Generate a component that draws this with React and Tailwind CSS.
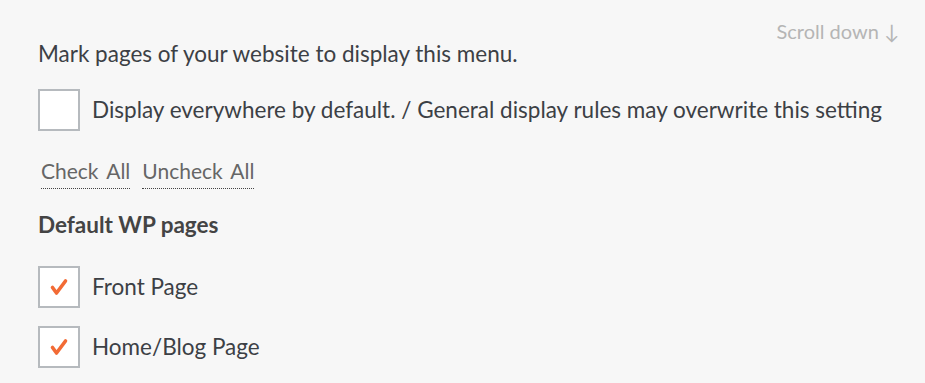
export default function App() {
  const Check = () => (
    <svg width="20" height="20" viewBox="0 0 20 20" className="block">
      <path d="M3.5 10.5 L7.5 16 L16.5 4" fill="none" stroke="#f26b35" strokeWidth="3.6" strokeLinecap="round" strokeLinejoin="round" />
    </svg>
  );
  const Box = ({ checked }) => (
    <div className="w-[42px] h-[42px] shrink-0 bg-white border-2 border-[#b6babe] flex items-center justify-center">
      {checked && <Check />}
    </div>
  );
  return (
    <div className="w-[925px] h-[383px] bg-[#f7f7f7] overflow-hidden relative text-[#3c4045]" style={{ fontFamily: "Lato, 'Open Sans', sans-serif" }}>
      <div className="absolute right-[26px] top-[17px] text-[20px] leading-[28px] text-[#b5b5b5]">Scroll down ↓</div>
      <div className="pl-[38px] pt-[40px]">
        <div className="text-[22.5px] leading-[28px]">Mark pages of your website to display this menu.</div>
        <div className="flex items-center gap-[12px] mt-[21px]">
          <Box />
          <div className="text-[22.5px]">Display everywhere by default. / General display rules may overwrite this setting</div>
        </div>
        <div className="flex gap-[12px] mt-[27px] ml-[3px] text-[21px] text-[#666] [word-spacing:3px]">
          <span className="border-b border-dotted border-[#444] leading-[26px] pb-[4px]">Check All</span>
          <span className="border-b border-dotted border-[#444] leading-[26px] pb-[4px]">Uncheck All</span>
        </div>
        <div className="mt-[22px] text-[22.5px] leading-[28px] font-bold text-[#444]">Default WP pages</div>
        <div className="flex items-center gap-[12px] mt-[27px]">
          <Box checked />
          <div className="text-[22.5px]">Front Page</div>
        </div>
        <div className="flex items-center gap-[12px] mt-[18px]">
          <Box checked />
          <div className="text-[22.5px]">Home/Blog Page</div>
        </div>
      </div>
    </div>
  );
}
